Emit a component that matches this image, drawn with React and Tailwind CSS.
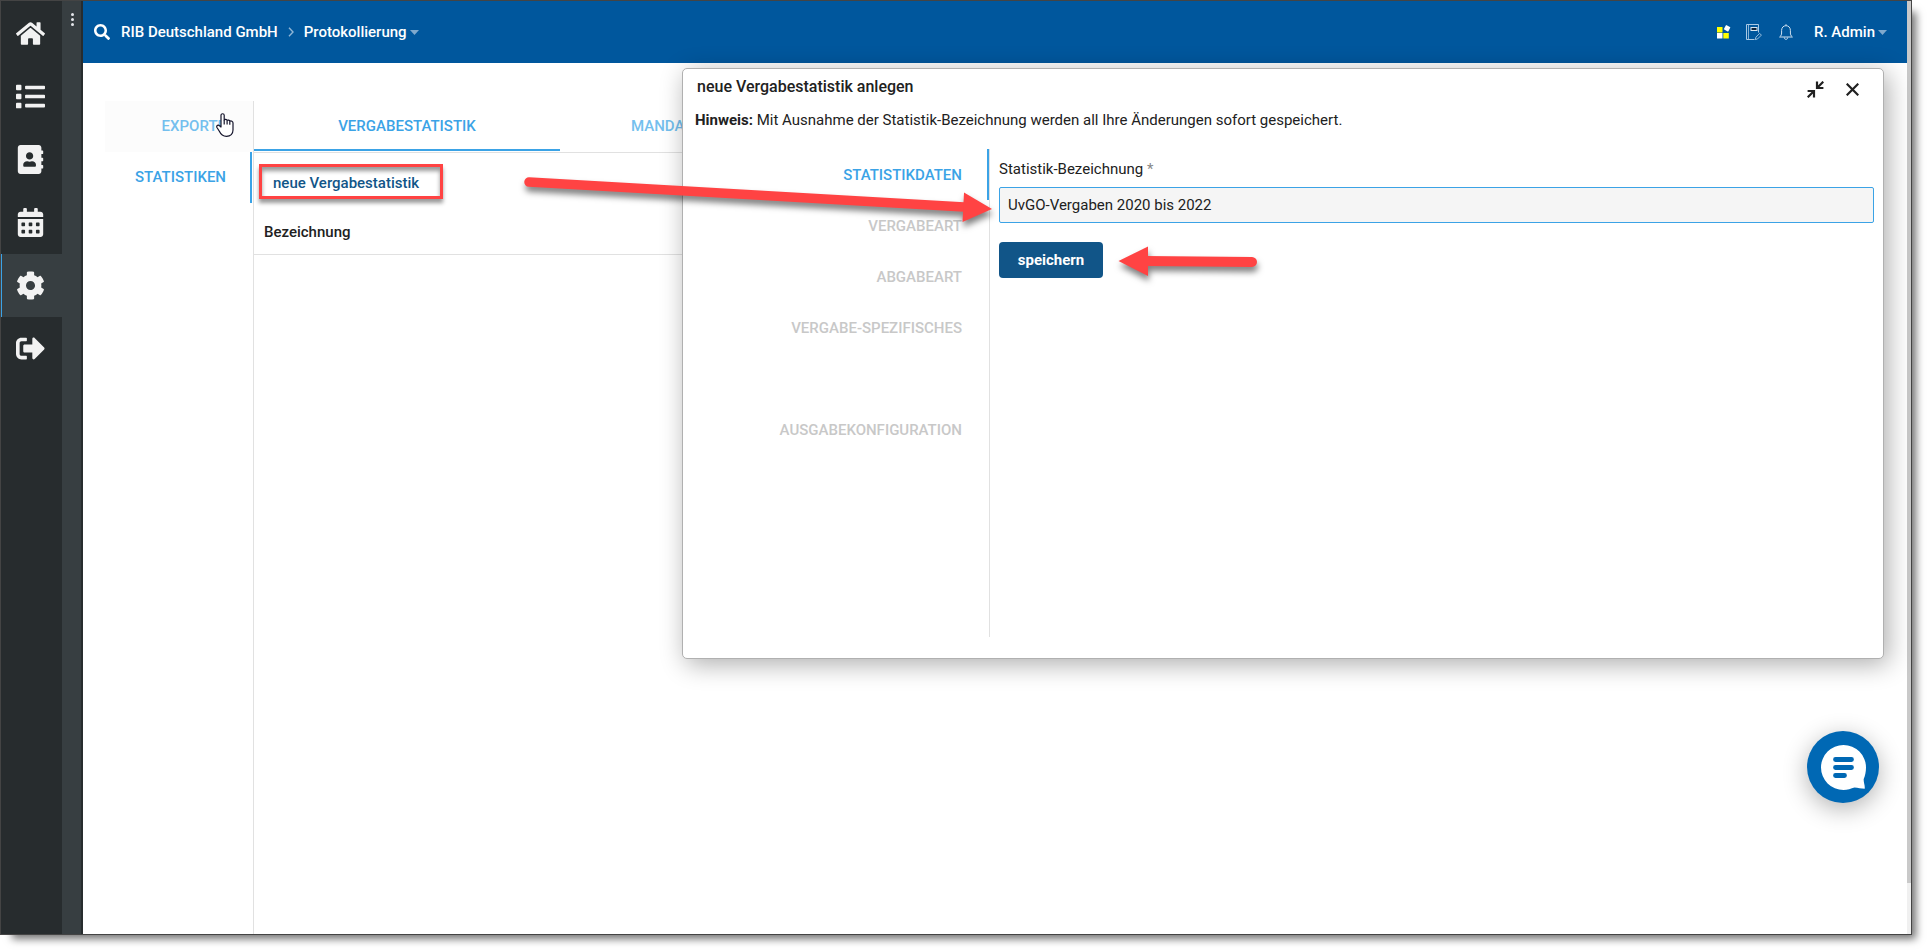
import React, { useState } from 'react';
import { FaHome, FaList, FaAddressBook, FaCalendarAlt, FaCog, FaSignOutAlt, FaSearch } from 'react-icons/fa';

const mainMenu = [
    { label: 'Startseite', icon: FaHome },
    { label: 'Liste', icon: FaList },
    { label: 'Adressbuch', icon: FaAddressBook },
    { label: 'Kalender', icon: FaCalendarAlt },
    { label: 'Einstellungen', icon: FaCog, active: true },
    { label: 'Abmelden', icon: FaSignOutAlt },
];

const Sidebar = () => (
    <aside className="flex shrink-0">
        <nav className="w-[61px] bg-[#272c2e] pt-px">
            {mainMenu.map(({ label, icon: Icon, active }) => (
                <a
                    key={label}
                    href="#"
                    aria-label={label}
                    className={`flex h-[63px] items-center border-l pl-3.5 text-[#f2f2f2] ${active ? 'border-[#3ba3e6] bg-[#373e41]' : 'border-transparent'}`}
                >
                    <Icon className="size-[29px]" />
                </a>
            ))}
        </nav>
        <div className="w-[21px] border-r-2 border-[#272c2e] bg-[#373e41]">
            <button aria-label="Menü" className="flex w-full flex-col items-center gap-0.5 pt-3 pl-0.5">
                <span className="size-[3px] rounded-full bg-gray-200" />
                <span className="size-[3px] rounded-full bg-gray-200" />
                <span className="size-[3px] rounded-full bg-gray-200" />
            </button>
        </div>
    </aside>
);

const AppsIcon = () => (
    <svg viewBox="0 0 14 14" className="size-3.5">
        <rect x="0" y="2" width="5.5" height="5.5" fill="#ffff00" />
        <rect x="0" y="8" width="5.5" height="5.5" fill="#ffffff" />
        <rect x="6.3" y="8" width="5.5" height="5.5" fill="#ffff00" />
        <rect x="7.6" y="0.8" width="5" height="5" rx="0.6" fill="#ffffff" transform="rotate(28 10.1 3.3)" />
    </svg>
);

const NotebookIcon = () => (
    <svg viewBox="0 0 16 17" className="h-[17px] w-4" fill="none" stroke="#a9c9e4">
        <path d="M8.5 15.5h-8v-15h12v8" />
        <path d="M2.5 0.5v15" strokeWidth="0.8" />
        <rect x="5" y="3.5" width="6" height="3" fill="#10243a" stroke="#d7e6f2" />
        <path d="M9.3 15.6l.6-2.4 3.8-3.8 1.7 1.7-3.8 3.8z" strokeWidth="0.9" />
    </svg>
);

const BellIcon = () => (
    <svg viewBox="0 0 14 16" className="h-4 w-3.5" fill="none" stroke="#cfe0ef">
        <path d="M7 0.2v1.4M0.6 13h12.8c-1.5-1.2-2-2.4-2-4V6.4C11.4 3.5 9.5 1.7 7 1.7S2.6 3.5 2.6 6.4V9c0 1.6-.5 2.8-2 4z" />
        <path d="M5.3 13.5c0 1.2.7 1.8 1.7 1.8s1.7-.6 1.7-1.8" />
    </svg>
);

const Caret = () => (
    <svg viewBox="0 0 9 5" className="h-[5px] w-[9px]">
        <path d="M0 0h9L4.5 5z" fill="#7fa9cd" />
    </svg>
);

const Header = () => (
    <header className="flex h-[62px] shrink-0 items-center justify-between bg-[#00579d] pr-5 pl-[11px] text-[15px] font-medium text-white">
        <div className="flex items-center">
            <button aria-label="Suche"><FaSearch className="size-4" /></button>
            <a href="#" className="ml-[11px]">RIB Deutschland GmbH</a>
            <svg viewBox="0 0 6 10" className="mx-2.5 h-2.5 w-1.5" fill="none" stroke="#8fb6d6" strokeWidth="1.4">
                <path d="M1 0.7L5 5 1 9.3" />
            </svg>
            <button className="flex items-center gap-[3px]">
                Protokollierung
                <Caret />
            </button>
        </div>
        <div className="flex items-center">
            <button aria-label="Anwendungen"><AppsIcon /></button>
            <button aria-label="Notizen" className="ml-[15px]"><NotebookIcon /></button>
            <button aria-label="Benachrichtigungen" className="ml-[17px]"><BellIcon /></button>
            <button className="ml-[21px] flex items-center gap-[3px]">
                R. Admin
                <Caret />
            </button>
        </div>
    </header>
);

const Content = () => (
    <main className="flex flex-1 pt-[38px] pr-6 pl-[22px] text-[15px] font-medium">
        <nav className="w-[149px] shrink-0 border-r border-[#e1e1e1] text-[#3ba3e6]">
            <a href="#" className="flex h-[51px] items-center justify-end bg-[#fcfcfc] pr-[27px] text-[#74bfee]">EXPORTE</a>
            <a href="#" className="mr-px flex h-[51px] items-center justify-end border-r-2 border-[#3ba3e6] pr-6">STATISTIKEN</a>
        </nav>
        <section className="min-w-0 flex-1">
            <div className="flex h-[52px] border-b border-[#e1e1e1] pb-px text-[#3ba3e6]">
                <button className="w-[306px] border-b-2 border-[#3ba3e6] pt-0.5">VERGABESTATISTIK</button>
                <button className="pl-[71px] text-[#74bfee]">MANDA</button>
            </div>
            <div className="h-[53px] pt-5 pl-[19px]">
                <button className="flex h-5 items-center text-[#115588]">neue Vergabestatistik</button>
            </div>
            <table className="w-full">
                <thead>
                    <tr className="border-b border-[#e1e1e1]">
                        <th className="pt-4 pb-3 pl-2.5 text-left leading-5 font-medium text-[#212121]">Bezeichnung</th>
                    </tr>
                </thead>
            </table>
        </section>
    </main>
);

const steps = ['VERGABEART', 'ABGABEART', 'VERGABE-SPEZIFISCHES', '', 'AUSGABEKONFIGURATION'];

const Dialog = () => {
    const [name, setName] = useState('UvGO-Vergaben 2020 bis 2022');

    return (
        <div
            role="dialog"
            aria-labelledby="dialog-title"
            className="absolute top-[67px] right-[27px] left-[681px] rounded-[5px] border border-[#b0b0b0] bg-white pb-[21px] text-[15px] text-[#212121] shadow-[4px_5px_26px_rgba(0,0,0,0.33)]"
        >
            <div className="flex h-9 items-center justify-between pr-6 pl-3.5">
                <h1 id="dialog-title" className="text-base font-medium">neue Vergabestatistik anlegen</h1>
                <div className="flex items-center gap-[22px] pt-1">
                    <button aria-label="Verkleinern">
                        <svg viewBox="0 0 17 17" className="size-[17px]" fill="none" stroke="#212121" strokeWidth="2.2">
                            <path d="M16.3 0.7L11 6M10 0.6V7h6.4M0.7 16.3L6 11M0.6 10H7v6.4" />
                        </svg>
                    </button>
                    <button aria-label="Schließen">
                        <svg viewBox="0 0 13 13" className="size-[13px]" fill="none" stroke="#212121" strokeWidth="2.2">
                            <path d="M0.7 0.7l11.6 11.6M12.3 0.7L0.7 12.3" />
                        </svg>
                    </button>
                </div>
            </div>
            <p className="mt-[3px] ml-3 leading-6"><b>Hinweis:</b> Mit Ausnahme der Statistik-Bezeichnung werden all Ihre Änderungen sofort gespeichert.</p>
            <div className="mt-[17px] flex h-[488px]">
                <nav className="w-[307px] shrink-0 border-r border-[#e1e1e1] font-medium text-[#c8c8c8]">
                    <a href="#" className="flex h-[51px] items-center justify-end border-r-2 border-[#3ba3e6] pt-0.5 pr-[25px] text-[#3ba3e6]">STATISTIKDATEN</a>
                    {steps.map((step, i) => (
                        <div key={i} className="flex h-[51px] items-center justify-end pt-0.5 pr-[27px]">{step}</div>
                    ))}
                </nav>
                <form className="flex-1 px-[9px] pt-2" onSubmit={(e) => e.preventDefault()}>
                    <label htmlFor="statistik" className="block leading-6">Statistik-Bezeichnung <span className="text-[#888]">*</span></label>
                    <input
                        id="statistik"
                        value={name}
                        onChange={(e) => setName(e.target.value)}
                        className="mt-1.5 block h-9 w-full rounded-xs border border-[#3ba3e6] bg-[#f5f5f5] px-2 outline-none"
                    />
                    <button className="mt-[19px] h-9 w-[104px] rounded bg-[#115588] font-bold text-white">speichern</button>
                </form>
            </div>
        </div>
    );
};

const ChatButton = () => (
    <button aria-label="Chat" className="absolute right-8 bottom-[131px] size-[72px] rounded-full bg-[#0068b4] shadow-[0_6px_24px_rgba(0,0,0,0.3)]">
        <svg viewBox="0 0 72 72" className="size-full">
            <path d="M36.5 14a22.5 22.5 0 1 0 0 45c4 0 7.500-1.500 11-2.600 3.500.2 6.500 1.200 10.200 1.400.5-3.300-1.300-6.500-1-9.800 1.500-3.200 2.300-7.500 2.300-11.500A22.5 22.5 0 0 0 36.5 14z" fill="#fff" />
            <path d="M28.5 28.5h16M28.5 36.5h16M28.5 44.5h9" stroke="#0068b4" strokeWidth="4.8" strokeLinecap="round" />
        </svg>
    </button>
);

// Hints drawn on top of the window: box, arrows and hand pointer
const Hints = () => (
    <>
        <div className="pointer-events-none absolute top-[163px] left-[258px] h-[35px] w-[184px] border-[3px] border-[#ff4343] shadow-[0_4px_4px_rgba(0,0,0,0.4),inset_0_4px_4px_rgba(0,0,0,0.4)]" />
        <svg viewBox="0 0 740 120" className="pointer-events-none absolute top-[169px] left-[519px] h-[120px] w-[740px] overflow-visible drop-shadow-[1px_5px_3px_rgba(0,0,0,0.5)]">
            <g fill="#ff4343" stroke="#ff4343">
                <path d="M9 12L444 37" strokeWidth="9.5" strokeLinecap="round" fill="none" />
                <path d="M444 22.5L472 39 442.5 52z" stroke="none" />
                <path d="M732 92L625 91" strokeWidth="10" strokeLinecap="round" fill="none" />
                <path d="M598.5 91L628 76.5V106z" stroke="none" />
            </g>
        </svg>
        <svg viewBox="0 0 18 24" className="pointer-events-none absolute top-[112px] left-[215px] h-6 w-[18px]" fill="#fff" stroke="#14142b" strokeWidth="1.2" strokeLinejoin="round">
            <path d="M5 14V2.3C5 .2 8.2 .2 8.2 2.3V7c.8-.9 2.5-.7 2.9.4.9-.7 2.4-.3 2.7.8 1.4-.7 3.2.1 3.200 1.700V17c0 3.500-2.500 6.300-6.500 6.300-4.500 0-6-2.500-7.300-5.300L.8 14.200c-.5-1.700 1.500-2.600 2.700-1.400z" />
            <path d="M8.2 7v4.5M11.1 7.4v4.1M13.8 8.2v3.5" />
        </svg>
    </>
);

const App = () => (
    <div className="h-screen overflow-hidden bg-white pr-[15px] pb-[15px] font-['Roboto',sans-serif]">
        <div className="relative flex h-full border border-[#444] bg-white shadow-[8px_8px_8px_-4px_rgba(0,0,0,0.55)]">
            <Sidebar />
            <div className="flex min-w-0 flex-1 flex-col">
                <Header />
                <Content />
            </div>
            <div className="w-1 shrink-0 bg-[#f0f0f0]">
                <div className="h-[882px] bg-[#c9c9c9]" />
            </div>
            <Dialog />
            <ChatButton />
            <Hints />
        </div>
    </div>
);

export default App;
